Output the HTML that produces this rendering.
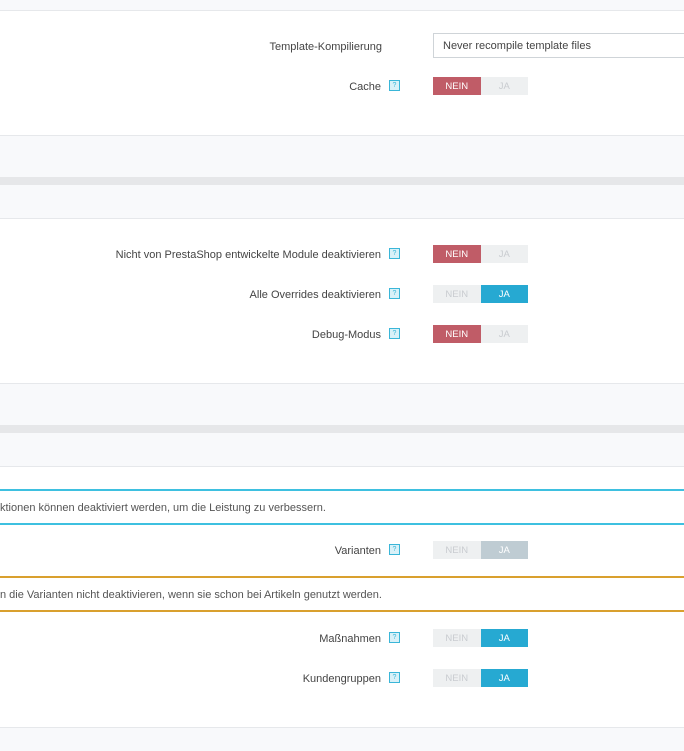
<!DOCTYPE html>
<html><head><meta charset="utf-8"><style>
body{margin:0;width:684px;height:750px;overflow:hidden;background:#fff;font-family:"Liberation Sans",sans-serif;font-size:11px;color:#555;position:relative}
.b{position:absolute;left:0;width:684px}
.lt{background:#f8f9fb}
.ln{border-bottom:1px solid #e6e8eb}
.dv{background:#e6e7e9}
.lab{position:absolute;right:303px;text-align:right;color:#444;white-space:nowrap;line-height:14px}
.h{position:absolute;left:389px;width:9px;height:9px;border:1px solid #3ab6d8;background:#d9f1f8;color:#3ab6d8;font-size:7px;line-height:9px;text-align:center}
.t{position:absolute;left:433px;width:95px;height:18px;display:flex;font-size:9.5px;line-height:20px;text-align:center}
.t span{flex:1;background:#eef0f1;color:#c9ccd0}
.t .r{background:#c05c67;color:#fff}
.t .bl{background:#26a9d2;color:#fff}
.t .g{background:#bfccd3;color:#fff}
.sel{position:absolute;left:433px;top:33px;width:260px;height:25px;border:1px solid #cfd4d8;box-sizing:border-box;padding-left:9px;line-height:25px;color:#444}
.box{position:absolute;left:0;width:684px;border-top:2px solid #3ec0e0;border-bottom:2px solid #3ec0e0;box-sizing:border-box;color:#555;white-space:nowrap}
</style></head><body>
<div class="b lt ln" style="top:0;height:10px"></div>
<div class="sel">Never recompile template files</div>
<div class="lab" style="top:40px;right:302px">Template-Kompilierung</div>
<div class="lab" style="top:80px">Cache</div><div class="h" style="top:80px">?</div>
<div class="t" style="top:77px"><span class="r">NEIN</span><span>JA</span></div>
<div class="b lt" style="top:135px;height:42px;border-top:1px solid #e6e8eb"></div>
<div class="b dv" style="top:177px;height:8px"></div>
<div class="b lt ln" style="top:185px;height:33px"></div>
<div class="lab" style="top:248px">Nicht von PrestaShop entwickelte Module deaktivieren</div><div class="h" style="top:248px">?</div>
<div class="t" style="top:245px"><span class="r">NEIN</span><span>JA</span></div>
<div class="lab" style="top:288px">Alle Overrides deaktivieren</div><div class="h" style="top:288px">?</div>
<div class="t" style="top:285px"><span>NEIN</span><span class="bl">JA</span></div>
<div class="lab" style="top:328px">Debug-Modus</div><div class="h" style="top:328px">?</div>
<div class="t" style="top:325px"><span class="r">NEIN</span><span>JA</span></div>
<div class="b lt" style="top:383px;height:42px;border-top:1px solid #e6e8eb"></div>
<div class="b dv" style="top:425px;height:8px"></div>
<div class="b lt ln" style="top:433px;height:33px"></div>
<div class="box" style="top:489px;height:36px;line-height:34px">ktionen können deaktiviert werden, um die Leistung zu verbessern.</div>
<div class="lab" style="top:544px">Varianten</div><div class="h" style="top:544px">?</div>
<div class="t" style="top:541px"><span>NEIN</span><span class="g">JA</span></div>
<div class="box" style="top:576px;height:36px;line-height:34px;border-color:#d9a02e">n die Varianten nicht deaktivieren, wenn sie schon bei Artikeln genutzt werden.</div>
<div class="lab" style="top:632px">Maßnahmen</div><div class="h" style="top:632px">?</div>
<div class="t" style="top:629px"><span>NEIN</span><span class="bl">JA</span></div>
<div class="lab" style="top:672px">Kundengruppen</div><div class="h" style="top:672px">?</div>
<div class="t" style="top:669px"><span>NEIN</span><span class="bl">JA</span></div>
<div class="b lt" style="top:727px;height:23px;border-top:1px solid #e6e8eb"></div>
</body></html>
